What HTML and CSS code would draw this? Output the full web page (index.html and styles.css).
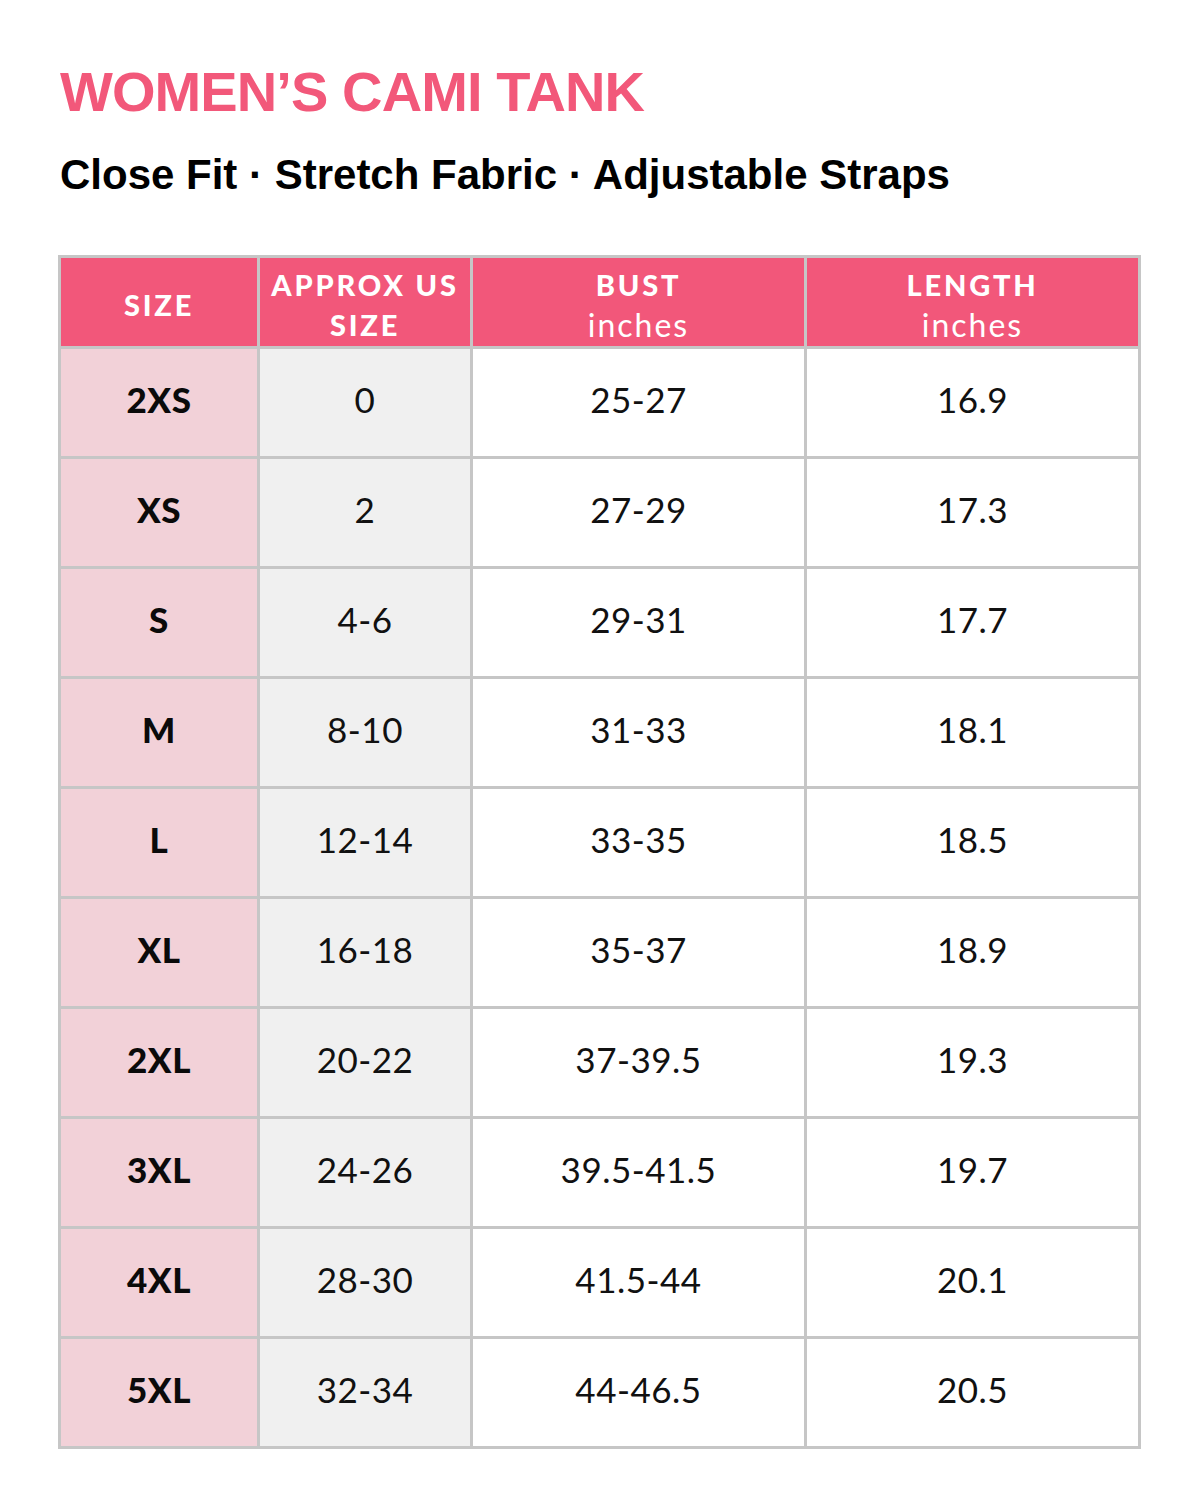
FILE: index.html
```html
<!DOCTYPE html>
<html lang="en">
<head>
<meta charset="utf-8">
<title>Women's Cami Tank Size Chart</title>
<link rel="stylesheet" href="styles.css">
</head>
<body>
<main class="page">
  <h1 class="title">WOMEN’S CAMI TANK</h1>
  <p class="subtitle">Close Fit · Stretch Fabric · Adjustable Straps</p>
  <div class="chart">
    <div class="hd"><div class="hd-text">SIZE</div></div>
    <div class="hd"><div class="hd-text">APPROX US<br>SIZE</div></div>
    <div class="hd"><div class="hd-text">BUST<br><span class="unit">inches</span></div></div>
    <div class="hd"><div class="hd-text">LENGTH<br><span class="unit">inches</span></div></div>

    <div class="c size">2XS</div><div class="c us">0</div><div class="c">25-27</div><div class="c">16.9</div>
    <div class="c size">XS</div><div class="c us">2</div><div class="c">27-29</div><div class="c">17.3</div>
    <div class="c size">S</div><div class="c us">4-6</div><div class="c">29-31</div><div class="c">17.7</div>
    <div class="c size">M</div><div class="c us">8-10</div><div class="c">31-33</div><div class="c">18.1</div>
    <div class="c size">L</div><div class="c us">12-14</div><div class="c">33-35</div><div class="c">18.5</div>
    <div class="c size">XL</div><div class="c us">16-18</div><div class="c">35-37</div><div class="c">18.9</div>
    <div class="c size">2XL</div><div class="c us">20-22</div><div class="c">37-39.5</div><div class="c">19.3</div>
    <div class="c size">3XL</div><div class="c us">24-26</div><div class="c">39.5-41.5</div><div class="c">19.7</div>
    <div class="c size">4XL</div><div class="c us">28-30</div><div class="c">41.5-44</div><div class="c">20.1</div>
    <div class="c size">5XL</div><div class="c us">32-34</div><div class="c">44-46.5</div><div class="c">20.5</div>
  </div>
</main>
</body>
</html>
```
FILE: styles.css
```css
html, body {
  margin: 0;
  padding: 0;
  background: #ffffff;
}

.page {
  padding: 64px 0 0 58px;
}

.title {
  margin: 0 0 0 2px;
  font-family: "Liberation Sans", Arial, sans-serif;
  font-weight: 700;
  font-size: 56px;
  line-height: 56px;
  letter-spacing: -0.9px;
  color: #f2587a;
}

.subtitle {
  margin: 34px 0 0 2px;
  font-family: "Liberation Sans", Arial, sans-serif;
  font-weight: 700;
  font-size: 42px;
  line-height: 42px;
  color: #000;
}

.chart {
  margin-top: 59px;
  display: grid;
  grid-template-columns: 196px 210px 331px 331px;
  grid-template-rows: 88px;
  grid-auto-rows: 107px;
  gap: 3px;
  padding: 3px;
  width: max-content;
  background: #c6c6c6;
  font-family: Lato, "Open Sans", sans-serif;
}

.hd {
  background: #f2577a;
  color: #ffffff;
  display: flex;
  align-items: center;
  justify-content: center;
  padding-top: 6px;
}

.hd-text {
  text-align: center;
  font-weight: 900;
  font-size: 29px;
  line-height: 40px;
  letter-spacing: 2.8px;
}

.unit {
  font-weight: 400;
  font-size: 32px;
  letter-spacing: 2px;
}

.c {
  background: #ffffff;
  color: #111111;
  font-size: 35px;
  font-weight: 400;
  display: flex;
  align-items: center;
  justify-content: center;
  letter-spacing: 0.5px;
  padding-bottom: 8px;
}

.size {
  background: #f2d1d8;
  font-weight: 900;
  color: #0a0a0a;
}

.us {
  background: #f0f0f0;
}
```
